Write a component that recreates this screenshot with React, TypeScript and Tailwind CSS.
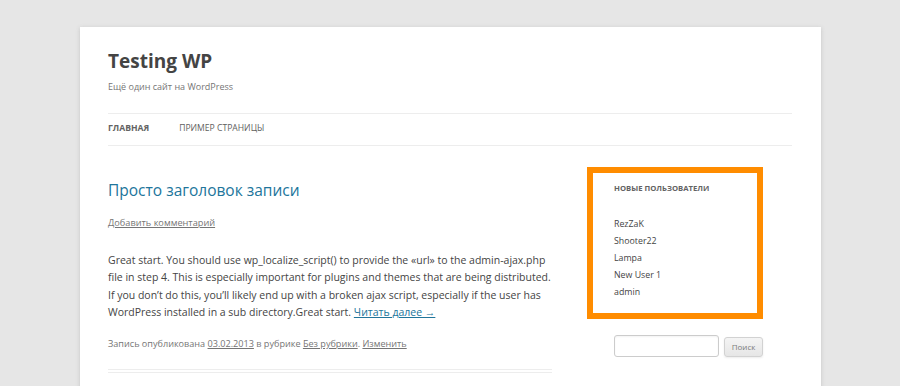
const users = ["RezZaK", "Shooter22", "Lampa", "New User 1", "admin"];

const lines = [
  "Great start. You should use wp_localize_script() to provide the «url» to the admin-ajax.php",
  "file in step 4. This is especially important for plugins and themes that are being distributed.",
  "If you don’t do this, you’ll likely end up with a broken ajax script, especially if the user has",
];

export default function App() {
  return (
    <div className="w-[900px] h-[386px] overflow-hidden bg-[#e6e6e6] pt-[27px] font-['Open_Sans',sans-serif]">
      <div className="ml-[80px] w-[741px] h-[400px] bg-white pl-[28px] pr-[29px] shadow-[0_1px_4px_rgba(100,100,100,0.25)]">
        {/* Header */}
        <header className="pt-[22px]">
          <h1 className="text-[19px] font-bold leading-[24px] text-[#444]">Testing WP</h1>
          <p className="mt-[6px] text-[9px] leading-[16px] text-[#757575]">Ещё один сайт на WordPress</p>
          <nav className="mt-[18px] border-y border-[#ededed] pt-[6px] pb-[9px]">
            <ul className="flex gap-[30px] text-[8.6px] leading-[16px] uppercase text-[#5e5e5e]">
              <li className="font-bold text-[#636363]">Главная</li>
              <li>Пример страницы</li>
            </ul>
          </nav>
        </header>

        <div className="flex gap-[35px]">
          {/* Main column */}
          <main className="w-[444px] shrink-0">
            <article className="border-b-4 border-double border-[#ededed] pb-[17px]">
              <h2 className="mt-[32px] text-[15.5px] leading-[24px] text-[#21759b]">Просто заголовок записи</h2>
              <a className="mt-[13px] block w-fit text-[9.2px] leading-[16px] text-[#757575] underline">
                Добавить комментарий
              </a>
              <div className="mt-[21px] text-[10.5px] leading-[17.3px] text-[#444]">
                {lines.map((l) => (
                  <span key={l} className="block whitespace-nowrap">{l}</span>
                ))}
                <span className="block whitespace-nowrap">
                  WordPress installed in a sub directory.Great start.{" "}
                  <a className="text-[#21759b] underline">Читать далее →</a>
                </span>
              </div>
              <footer className="mt-[15px] text-[9.1px] leading-[16px] text-[#757575] whitespace-nowrap">
                Запись опубликована <a className="underline">03.02.2013</a> в рубрике{" "}
                <a className="underline">Без рубрики</a>. <a className="underline">Изменить</a>
              </footer>
            </article>
          </main>

          {/* Sidebar */}
          <aside className="w-[176px] shrink-0">
            <div className="mt-[21px] border-[6px] border-[#ff8c00] pl-[21px] pt-[8px] pb-[12px]">
              <h3 className="text-[7.7px] font-bold leading-[14px] uppercase text-[#636363]">Новые пользователи</h3>
              <ul className="mt-[21px] text-[8.8px] leading-[17px] text-[#444]">
                {users.map((u) => (
                  <li key={u}>{u}</li>
                ))}
              </ul>
            </div>
            <form className="mt-[16px] ml-[27px] flex items-end gap-[5px]">
              <input
                type="text"
                className="w-[105px] h-[22px] rounded-[3px] border border-[#ccc] bg-white shadow-[inset_0_1px_2px_rgba(0,0,0,0.05)]"
              />
              <button
                type="button"
                className="w-[39px] h-[20px] rounded-[3px] border border-[#d2d2d2] bg-gradient-to-b from-[#f4f4f4] to-[#e6e6e6] text-[8px] text-[#7c7c7c] shadow-[0_1px_2px_rgba(64,64,64,0.1)]"
              >
                Поиск
              </button>
            </form>
          </aside>
        </div>
      </div>
    </div>
  );
}
